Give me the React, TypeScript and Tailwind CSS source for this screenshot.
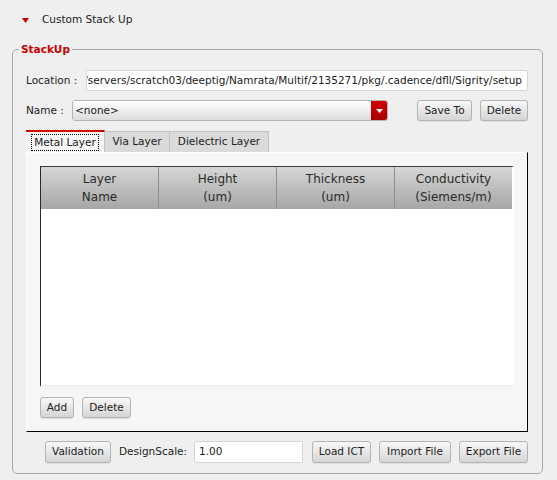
import React from "react";

const font = { fontFamily: '"DejaVu Sans", "Liberation Sans", sans-serif' };

function Btn({ w, children }: { w: string; children: React.ReactNode }) {
  return (
    <div
      className={`${w} h-[21px] shrink-0 flex items-center justify-center rounded-[3px] border border-[#b3b3b3] bg-linear-to-b from-[#f8f8f8] to-[#d5d5d5] text-[#222] shadow-[0_1px_0_#e0e0e0]`}
    >
      {children}
    </div>
  );
}

export default function App() {
  const cols = [
    ["Layer", "Name"],
    ["Height", "(um)"],
    ["Thickness", "(um)"],
    ["Conductivity", "(Siemens/m)"],
  ];
  return (
    <div
      style={font}
      className="w-[557px] h-[480px] bg-[#efefef] text-[10.5px] text-[#222] pt-[10px] overflow-hidden"
    >
      {/* header */}
      <div className="h-[20px] flex items-center pl-[22px]">
        <svg width="7" height="5" viewBox="0 0 7 5" className="mr-[13px]">
          <polygon points="0,0 7,0 3.5,5" fill="#c40000" />
        </svg>
        <span>Custom Stack Up</span>
      </div>

      {/* group box */}
      <div className="relative mt-[19px] ml-[12px] w-[531px] h-[425px] border border-[#a9a9a9] rounded-[5px] pt-[20px] pl-[13px] pr-[14px]">
        <span className="absolute -top-[8px] left-[6px] px-[2px] bg-[#efefef] text-[#cc0000] font-bold leading-[14px]">
          StackUp
        </span>

        {/* location */}
        <div className="flex items-center h-[21px]">
          <span className="w-[60px] shrink-0">Location :</span>
          <div className="flex-1 h-[21px] bg-white border border-[#d6d6d6] rounded-[2px] flex items-center justify-end overflow-hidden pr-[5px]">
            <span className="whitespace-nowrap">
              /servers/scratch03/deeptig/Namrata/Multif/2135271/pkg/.cadence/dfll/Sigrity/setup
            </span>
          </div>
        </div>

        {/* name */}
        <div className="flex items-center h-[21px] mt-[9px]">
          <span className="w-[46px] shrink-0">Name :</span>
          <div className="w-[316px] h-[21px] flex rounded-[3px] border border-[#b3b3b3] overflow-hidden">
            <div className="flex-1 bg-linear-to-b from-[#ffffff] to-[#dcdcdc] flex items-center pl-[2px]">
              &lt;none&gt;
            </div>
            <div className="w-[16px] bg-linear-to-b from-[#d40000] to-[#a80000] flex items-center justify-center">
              <svg width="7" height="4" viewBox="0 0 7 4">
                <polygon points="0,0 7,0 3.5,4" fill="#ffffff" />
              </svg>
            </div>
          </div>
          <div className="ml-[29px]">
            <Btn w="w-[55px]">Save To</Btn>
          </div>
          <div className="ml-[8px]">
            <Btn w="w-[48px]">Delete</Btn>
          </div>
        </div>

        {/* tabs */}
        <div className="flex items-end h-[22px] mt-[9px]">
          <div className="w-[79px] h-[22px] border-t-2 border-t-[#cc0000] border-r border-r-[#c4c4c4] bg-[#f6f6f6] flex items-center justify-center">
            <span className="border border-dotted border-black px-[2px] leading-[15px]">
              Metal Layer
            </span>
          </div>
          <div className="w-[65px] h-[21px] bg-[#dadada] border-t border-r border-[#c0c0c0] flex items-center justify-center">
            Via Layer
          </div>
          <div className="w-[99px] h-[21px] bg-[#dadada] border-t border-r border-[#c0c0c0] flex items-center justify-center">
            Dielectric Layer
          </div>
        </div>

        {/* panel */}
        <div className="w-[502px] h-[280px] bg-[#f6f6f6] border-l border-t border-l-white border-t-white border-r border-b border-r-black border-b-black pt-[13px] pl-[13px] pr-[13px] flex flex-col">
          <div className="w-[474px] h-[221px] border-t border-l border-t-[#3a3a3a] border-l-[#2a2a2a] border-r-2 border-b-2 border-r-white border-b-[#f0f0f0] bg-white flex flex-col">
            <div className="flex h-[42px] w-[471px]">
              {cols.map((c, i) => (
                <div
                  key={i}
                  className={`flex-1 flex flex-col items-center justify-center text-[12px] leading-[18px] bg-linear-to-b from-[#d6d6d6] to-[#a7a7a7] text-[#2a2a2a] ${
                    i < 3 ? "border-r border-r-[#8e8e8e]" : ""
                  }`}
                >
                  <span>{c[0]}</span>
                  <span>{c[1]}</span>
                </div>
              ))}
            </div>
            <div className="flex-1 bg-white" />
          </div>
          <div className="flex mt-[10px] gap-[8px]">
            <Btn w="w-[34px]">Add</Btn>
            <Btn w="w-[49px]">Delete</Btn>
          </div>
        </div>

        {/* bottom row */}
        <div className="flex items-center h-[22px] mt-[9px] pl-[19px]">
          <Btn w="w-[66px] !h-[22px]">Validation</Btn>
          <span className="ml-[8px] w-[75px] shrink-0">DesignScale:</span>
          <div className="w-[109px] h-[22px] bg-white border border-[#d6d6d6] rounded-[2px] flex items-center pl-[4px]">
            1.00
          </div>
          <div className="ml-[9px]">
            <Btn w="w-[59px] !h-[22px]">Load ICT</Btn>
          </div>
          <div className="ml-[8px]">
            <Btn w="w-[72px] !h-[22px]">Import File</Btn>
          </div>
          <div className="ml-[8px]">
            <Btn w="w-[69px] !h-[22px]">Export File</Btn>
          </div>
        </div>
      </div>
    </div>
  );
}
